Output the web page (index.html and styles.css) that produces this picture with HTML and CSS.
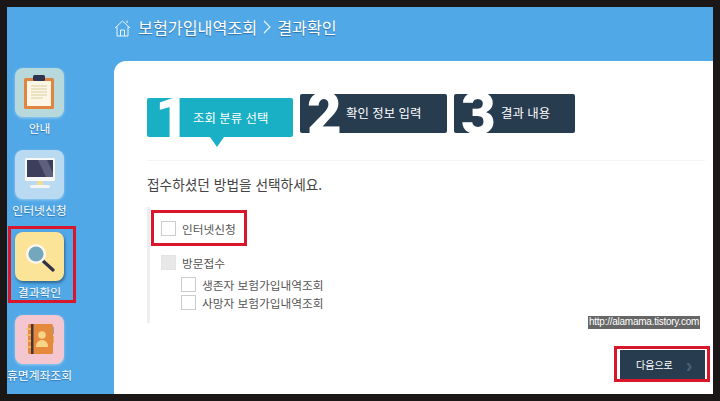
FILE: index.html
```html
<!DOCTYPE html>
<html lang="ko">
<head>
  <meta charset="UTF-8">
  <title>보험가입내역조회</title>
  <link rel="stylesheet" href="styles.css">
</head>
<body>
  <div class="frame">
    <nav class="sidebar">
      <a class="nav-item">
        <span class="tile tile-info">
          <svg width="33" height="35" viewBox="0 0 33 35">
            <rect x="1" y="3" width="30" height="31" rx="1.5" fill="#e08440"/>
            <rect x="4" y="6" width="24" height="25" fill="#fdf6e6"/>
            <path d="M8 11h16M8 14h16M8 17h16M8 20h16M8 23h12" stroke="#e3dcb4" stroke-width="1.3"/>
            <rect x="10" y="0" width="12" height="6" rx="1.5" fill="#2e3350"/>
          </svg>
        </span>
        <span class="nav-label">안내</span>
      </a>
      <a class="nav-item">
        <span class="tile tile-web">
          <svg width="32" height="33" viewBox="0 0 32 33">
            <rect x="1" y="0" width="30" height="23" rx="1.5" fill="#f8f8f6"/>
            <rect x="3" y="2" width="26" height="17" fill="#3b3f5c"/>
            <path d="M14 2h9l6 13v4h-7z" fill="#5d5f7c"/>
            <rect x="13" y="23" width="6" height="4" fill="#f2dc93"/>
            <rect x="6" y="27" width="20" height="3" rx="1.5" fill="#f4f4f2"/>
          </svg>
        </span>
        <span class="nav-label">인터넷신청</span>
      </a>
      <a class="nav-item nav-item-on">
        <span class="tile tile-result">
          <svg class="lens" width="30" height="30" viewBox="0 0 30 30">
            <path d="M17 17l11 10" stroke="#2f3146" stroke-width="3.2" stroke-linecap="round"/>
            <circle cx="11" cy="11" r="10" fill="#fdf8ec"/>
            <circle cx="11" cy="11" r="7.6" fill="#74a6bd"/>
          </svg>
        </span>
        <span class="nav-label">결과확인</span>
      </a>
      <a class="nav-item nav-item-last">
        <span class="tile tile-dormant">
          <svg width="30" height="33" viewBox="0 0 30 33">
            <rect x="26" y="4" width="3" height="7" fill="#8fa5a8"/>
            <rect x="26" y="13" width="3" height="7" fill="#e0b052"/>
            <rect x="3" y="1" width="25" height="30" rx="1.5" fill="#e58a3c"/>
            <rect x="6" y="1" width="2.5" height="30" fill="#45343a"/>
            <path d="M1 6h5M1 12h5M1 18h5M1 24h5" stroke="#f3c56c" stroke-width="1.6"/>
            <circle cx="17" cy="12" r="3.8" fill="#f7d488"/>
            <path d="M11 24c0-5 3-7 6-7s6 2 6 7z" fill="#f7d488"/>
          </svg>
        </span>
        <span class="nav-label">휴면계좌조회</span>
      </a>
    </nav>

    <div class="main">
      <header class="page-head">
        <svg class="home" width="17" height="18" viewBox="0 0 17 18" fill="none" stroke="#eaf5fc" stroke-width="1">
          <path d="M1 9l7.5-7L16 9M3 7.5V17h11V7.5M6.5 17v-6h4v6M13 1.5v2.5"/>
        </svg>
        <h1 class="page-title">
          <span>보험가입내역조회</span>
          <svg class="sep" width="8" height="14" viewBox="0 0 8 14" fill="none" stroke="#f2f9fe" stroke-width="1.1">
            <path d="M1 1l6 6-6 6"/>
          </svg>
          <span>결과확인</span>
        </h1>
      </header>

      <section class="card">
        <div class="steps">
          <div class="step step-on"><span class="step-no">1</span><span class="step-name">조회 분류 선택</span></div>
          <div class="step step-two"><span class="step-no">2</span><span class="step-name">확인 정보 입력</span></div>
          <div class="step step-three"><span class="step-no">3</span><span class="step-name">결과 내용</span></div>
        </div>

        <p class="lead">접수하셨던 방법을 선택하세요.</p>

        <div class="options">
          <label class="opt opt-marked"><span class="box"></span>인터넷신청</label>
          <label class="opt opt-visit"><span class="box box-off"></span>방문접수</label>
          <label class="opt opt-sub"><span class="box"></span>생존자 보험가입내역조회</label>
          <label class="opt opt-sub"><span class="box"></span>사망자 보험가입내역조회</label>
        </div>

        <span class="watermark">http://alamama.tistory.com</span>

        <div class="next-mark">
          <button class="next-btn">다음으로<span class="chev">›</span></button>
        </div>
      </section>
    </div>
  </div>
</body>
</html>
```

FILE: styles.css
```css
* {
  box-sizing: border-box;
}
html, body {
  margin: 0;
  height: 401px;
  overflow: hidden;
}
body {
  background-color: #1b1717;
  font-family: "Noto Sans CJK KR", "Noto Sans", sans-serif;
  padding: 7px;
}
.frame {
  display: flex;
  height: 387px;
  background-color: #51a8e7;
}

/* left menu */
.sidebar {
  width: 107px;
  padding: 55px 0 0 1px;
  display: flex;
  flex-direction: column;
  gap: 5px;
}
.nav-item {
  width: 68px;
  height: 77px;
  border: 3px solid transparent;
  padding: 3px 0 0 4px;
}
.nav-item-on {
  border-color: #d8172c;
}
.nav-item-last {
  margin-top: 1px;
}
.tile {
  display: flex;
  align-items: center;
  justify-content: center;
  width: 49px;
  height: 49px;
  border-radius: 8px;
}
.tile-info {
  background-color: #b7d9dc;
  box-shadow: 0 1px 3px rgba(200,230,250,0.6);
}
.tile-web {
  background-color: #b9daf0;
  box-shadow: 0 1px 3px rgba(200,230,250,0.6);
}
.tile-result {
  background-color: #fbe398;
  box-shadow: 1px 2px 3px rgba(20,50,80,0.55);
}
.tile-dormant {
  background-color: #f4c6d0;
  box-shadow: 0 1px 3px rgba(200,230,250,0.6);
}
.lens {
  margin-top: 3px;
}
.nav-label {
  display: flex;
  justify-content: center;
  width: 49px;
  margin-top: 3px;
  font-size: 11.8px;
  line-height: 16px;
  color: #fff;
  white-space: nowrap;
  text-shadow: 0 1px 1px rgba(20,60,100,0.5);
}

/* title bar */
.main {
  flex: 1;
  display: flex;
  flex-direction: column;
}
.page-head {
  height: 54px;
  display: flex;
  align-items: flex-start;
  padding-top: 10px;
  gap: 7px;
}
.home {
  margin-top: 2px;
}
.page-title {
  display: flex;
  align-items: center;
  gap: 6px;
  margin: 0;
  font-size: 16.2px;
  line-height: 20px;
  font-weight: 400;
  color: #fff;
  text-shadow: 0 1px 1px rgba(20,60,100,0.5);
}

/* white content card */
.card {
  flex: 1;
  position: relative;
  display: flex;
  flex-direction: column;
  background-color: #fff;
  border-top-left-radius: 12px;
  padding: 33px 3px 12px 33px;
}
.steps {
  display: flex;
  gap: 7px;
  height: 67px;
  margin-right: 5px;
  border-bottom: 1px solid #f3f4f5;
}
.step {
  position: relative;
  display: flex;
  height: 39px;
  background-color: #283c50;
  border-radius: 2px;
  color: #fff;
}
.step-on {
  width: 146px;
  margin-top: 4px;
  background-color: #19afc4;
}
.step-on::after {
  content: "";
  position: absolute;
  left: 63px;
  top: 39px;
  border-left: 7px solid transparent;
  border-right: 7px solid transparent;
  border-top: 10px solid #19afc4;
}
.step-two {
  width: 147px;
}
.step-three {
  width: 121px;
}
/* digits are white, so what sticks out of the bar melts into the card */
.step-no {
  width: 46px;
  padding-left: 7px;
  font-family: "Roboto", sans-serif;
  font-weight: 900;
  font-size: 60px;
  line-height: 39px;
  color: #fff;
}
.step-on .step-no {
  padding-left: 8px;
}
.step-name {
  font-size: 12.4px;
  line-height: 38px;
  white-space: nowrap;
}
.step-on .step-name {
  line-height: 40px;
}
.step-three .step-name {
  margin-left: 1px;
}
.lead {
  margin: 13px 0;
  font-size: 13.7px;
  line-height: 20px;
  color: #444;
}
.options {
  width: 110px;
  height: 116px;
  border-left: 3px solid #eeeeee;
  padding: 3px 0 0 1px;
}
.opt {
  display: flex;
  align-items: center;
  font-size: 11.7px;
  color: #555;
  white-space: nowrap;
}
.opt-marked {
  width: 96px;
  height: 36px;
  border: 3px solid #d8172c;
  padding-left: 7px;
  gap: 6px;
}
.opt-visit {
  height: 15px;
  margin: 9px 0 7px;
  padding-left: 10px;
  gap: 6px;
}
.opt-sub {
  height: 15px;
  margin-bottom: 3px;
  padding-left: 30px;
  gap: 6px;
}
.box {
  width: 15px;
  height: 15px;
  flex: none;
  border: 1px solid #cccccc;
  background-color: #fff;
}
.box-off {
  background-color: #e8e8e8;
  border-color: #e4e4e4;
}
.watermark {
  position: absolute;
  left: 474px;
  top: 255px;
  width: 112px;
  height: 13px;
  padding-left: 1px;
  background-color: #666;
  color: #fff;
  font-family: "Liberation Sans", sans-serif;
  font-size: 10px;
  letter-spacing: -0.25px;
  line-height: 12px;
  white-space: nowrap;
}
.next-mark {
  margin-top: auto;
  margin-left: auto;
  width: 96px;
  height: 36px;
  border: 3px solid #d8172c;
  padding: 1px 2px 0 3px;
  background-color: #fff;
}
.next-btn {
  display: flex;
  align-items: center;
  width: 85px;
  height: 29px;
  border: none;
  padding: 0 0 0 16px;
  background-color: #283c50;
  color: #fff;
  font-family: inherit;
  font-size: 10px;
}
.chev {
  margin-left: 13px;
  font-family: "Liberation Sans", sans-serif;
  font-size: 20px;
  font-weight: 700;
  line-height: 20px;
  color: #4a5f74;
}
```
